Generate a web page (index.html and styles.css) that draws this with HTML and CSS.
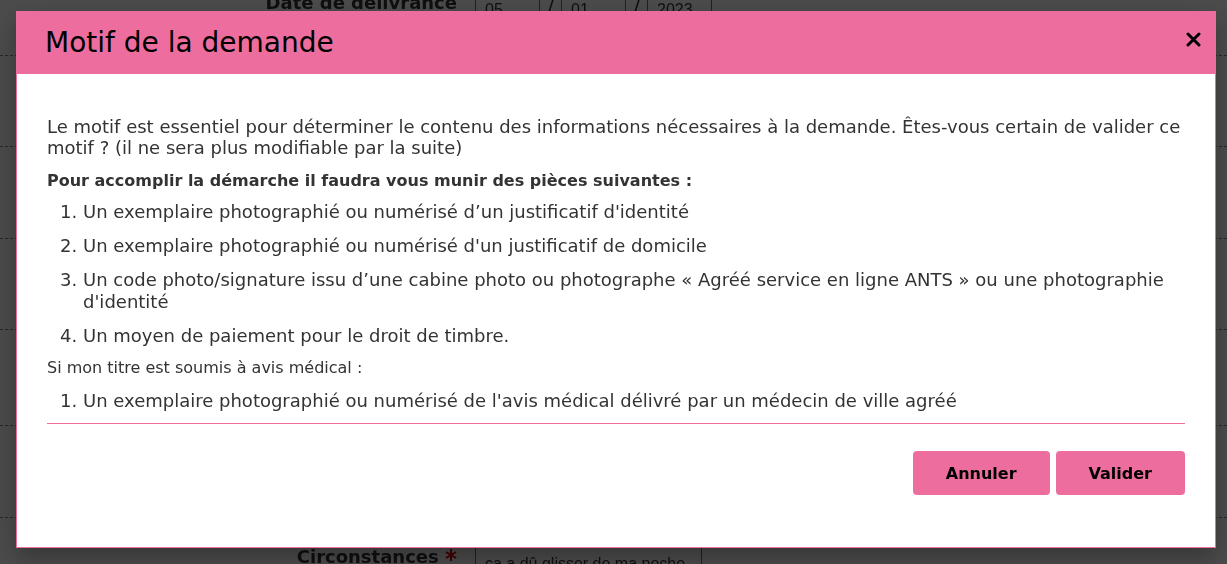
FILE: index.html
```
<!DOCTYPE html>
<html lang="fr">
<head>
<meta charset="utf-8">
<meta name="viewport" content="width=device-width, initial-scale=1">
<title>Motif de la demande</title>
<link rel="stylesheet" href="styles.css">
</head>
<body>
<form class="request" inert>
  <div class="row row-date">
    <label class="label" for="day">Date de délivrance</label>
    <div class="date">
      <input class="field field-day" id="day" value="05">
      <span class="slash">/</span>
      <input class="field field-day" aria-label="Mois" value="01">
      <span class="slash">/</span>
      <input class="field field-day" aria-label="Année" value="2023">
    </div>
  </div>
  <div class="row"></div>
  <div class="row row-mid"></div>
  <div class="row"></div>
  <div class="row row-tall"></div>
  <div class="row row-mid"></div>
  <div class="row row-last">
    <label class="label" for="circ">Circonstances <svg class="star" viewBox="0 0 12 12" aria-hidden="true"><path d="M6 0v12M1 3l10 6M11 3L1 9"/></svg></label>
    <input class="field field-text" id="circ" value="ça a dû glisser de ma poche">
  </div>
</form>
<div class="backdrop">
  <section class="modal" role="dialog" aria-modal="true" aria-labelledby="title">
    <header class="head">
      <h1 class="title" id="title">Motif de la demande</h1>
      <button class="close" type="button" aria-label="Fermer"><svg viewBox="0 0 16 16" width="16" height="16" aria-hidden="true"><path d="M3 3l11 11M14 3L3 14"/></svg></button>
    </header>
    <div class="body">
      <p class="text">Le motif est essentiel pour déterminer le contenu des informations nécessaires à la demande. Êtes-vous certain de valider ce motif ? (il ne sera plus modifiable par la suite)</p>
      <p class="strong">Pour accomplir la démarche il faudra vous munir des pièces suivantes :</p>
      <ol class="list">
        <li>Un exemplaire photographié ou numérisé d’un justificatif d'identité</li>
        <li>Un exemplaire photographié ou numérisé d'un justificatif de domicile</li>
        <li>Un code photo/signature issu d’une cabine photo ou photographe « Agréé service en ligne ANTS » ou une photographie d'identité</li>
        <li>Un moyen de paiement pour le droit de timbre.</li>
      </ol>
      <p class="note">Si mon titre est soumis à avis médical :</p>
      <ol class="list">
        <li>Un exemplaire photographié ou numérisé de l'avis médical délivré par un médecin de ville agréé</li>
      </ol>
      <footer class="actions">
        <button class="btn" type="button">Annuler</button>
        <button class="btn" type="button">Valider</button>
      </footer>
    </div>
  </section>
</div>
</body>
</html>
```
FILE: styles.css
```
* { box-sizing: border-box; }
body {
  margin: 0;
  color: #333;
  font-family: Verdana, "DejaVu Sans", sans-serif;
}
.request {
  position: fixed;
  inset: -20px 0 0;
  overflow: hidden;
}
.row {
  display: flex;
  gap: 18px;
  height: 91px;
  border-bottom: 1px dashed #888;
}
.row-date { height: 76px; }
.row-mid { height: 92px; }
.row-tall { height: 96px; }
.row-last {
  height: auto;
  padding-top: 16px;
  border: 0;
}
.label {
  width: 457px;
  padding-top: 11px;
  font-size: 18px;
  font-weight: bold;
  line-height: 24px;
  text-align: right;
}
.star {
  width: 12px;
  height: 12px;
  vertical-align: 2px;
  fill: none;
  stroke: #d00;
  stroke-width: 2;
}
.date {
  display: flex;
  align-items: flex-start;
}
.slash {
  width: 21px;
  padding-top: 14px;
  font-size: 20px;
  line-height: 24px;
  text-align: center;
}
.field {
  height: 60px;
  padding: 0 9px;
  border: 1px solid #d04070;
  background: transparent;
  color: #333;
  font-family: Arial, "Liberation Sans", sans-serif;
  font-size: 16px;
}
.field-day { width: 65px; }
.field-text { width: 227px; }
.backdrop {
  position: fixed;
  inset: 0;
  overflow: auto;
  padding: 11px 11px 16px 16px;
  background: rgba(0, 0, 0, .7);
}
.modal {
  border: 1px solid #ed6e9e;
  background: #fff;
  box-shadow: 0 10px 24px rgba(0, 0, 0, .3);
}
.head {
  display: flex;
  align-items: center;
  justify-content: space-between;
  padding: 12px 14px 12px 28px;
  background: #ed6e9e;
  color: #000;
}
.title {
  margin: 0;
  font-size: 28px;
  font-weight: normal;
  line-height: 38px;
}
.close {
  display: flex;
  margin-bottom: 8px;
  padding: 0;
  border: 0;
  background: none;
}
.close svg {
  fill: none;
  stroke: #000;
  stroke-width: 3;
  stroke-linecap: round;
}
.body { padding: 42px 30px 52px; }
.text {
  margin: 0 0 13px;
  font-size: 18px;
  line-height: 21px;
}
.strong {
  margin: 0 0 10px;
  font-size: 16px;
  font-weight: bold;
  line-height: 20px;
}
.note {
  margin: 0 0 12px;
  font-size: 16px;
  line-height: 20px;
}
.list {
  margin: 0;
  padding-left: 36px;
  font-size: 18px;
  line-height: 22px;
}
.list li { margin-bottom: 12px; }
.list li:last-child { margin-bottom: 11px; }
.actions {
  display: flex;
  justify-content: flex-end;
  gap: 6px;
  padding-top: 27px;
  border-top: 1px solid #ed6e9e;
}
.btn {
  padding: 13px 33px 11px;
  border: 0;
  border-radius: 4px;
  background: #ed6e9e;
  color: #000;
  font-family: inherit;
  font-size: 16px;
  font-weight: bold;
  line-height: 20px;
}
```
